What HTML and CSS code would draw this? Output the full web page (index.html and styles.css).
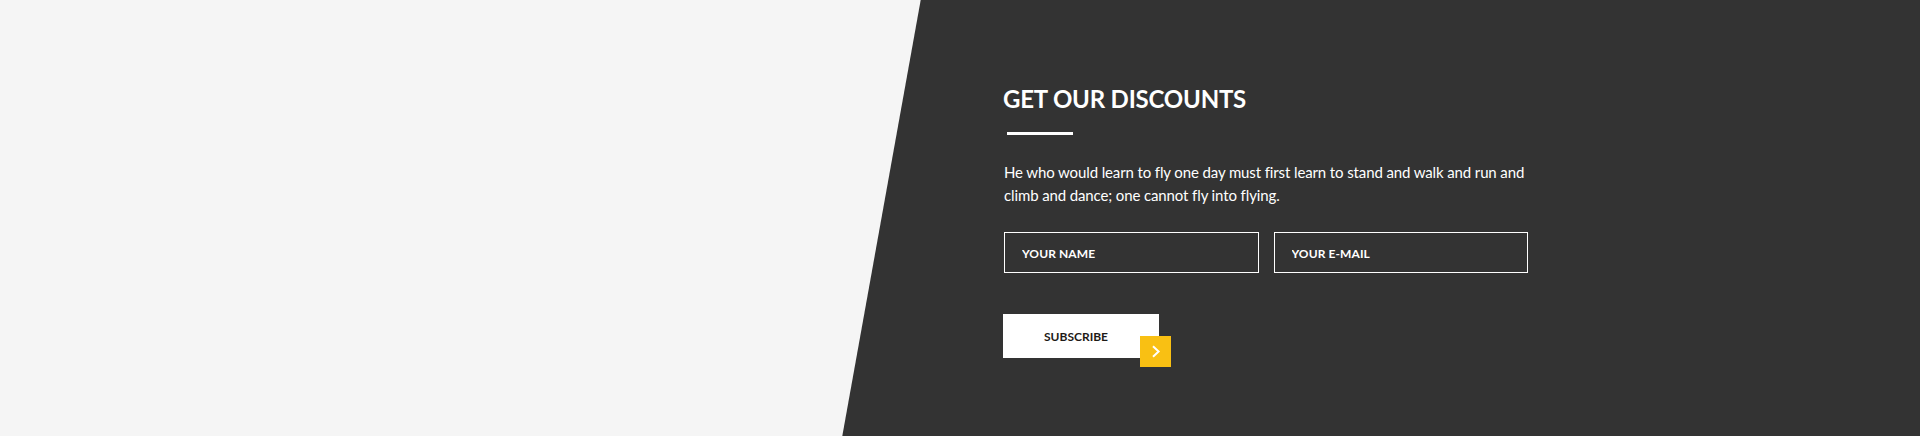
FILE: index.html
```html
<!DOCTYPE html>
<html lang="en">
<head>
<meta charset="utf-8">
<title>Get our discounts</title>
<link rel="stylesheet" href="styles.css">
</head>
<body>
<section class="promo">
  <div class="promo-bg"></div>
  <div class="promo-inner">
    <div class="promo-spacer"></div>
    <div class="promo-content">
      <h2 class="promo-title">GET OUR DISCOUNTS</h2>
      <span class="promo-rule"></span>
      <p class="promo-text">He who would learn to fly one day must first learn to stand and walk and run and climb and dance; one cannot fly into flying.</p>
      <form class="promo-form">
        <div class="field-row">
          <input class="field" type="text" placeholder="YOUR NAME">
          <input class="field" type="email" placeholder="YOUR E-MAIL">
        </div>
        <button class="subscribe" type="button">SUBSCRIBE
          <span class="subscribe-arrow">
            <svg width="10" height="13" viewBox="0 0 10 13"><path d="M2 1.2 L7.6 6.5 L2 11.8" fill="none" stroke="#fff" stroke-width="2"/></svg>
          </span>
        </button>
      </form>
    </div>
  </div>
</section>
</body>
</html>
```
FILE: styles.css
```css
* { box-sizing: border-box; }
html, body { margin: 0; padding: 0; }
body {
  font-family: Lato, "Open Sans", "Liberation Sans", sans-serif;
  background: #f5f5f5;
}
.promo {
  position: relative;
  height: 436px;
  background: #f5f5f5;
  overflow: hidden;
}
.promo-bg {
  position: absolute;
  inset: 0;
  background: #333333;
  clip-path: polygon(920.7px 0, 100% 0, 100% 100%, 842.3px 100%);
}
.promo-inner {
  position: relative;
  display: flex;
  height: 100%;
}
.promo-spacer {
  width: 1003px;
  flex: none;
}
.promo-content {
  width: 525px;
  padding-top: 85px;
  color: #fff;
}
.promo-title {
  margin: 0;
  font-size: 24px;
  line-height: 1.2;
  font-weight: 700;
  letter-spacing: -0.2px;
  color: #fff;
}
.promo-rule {
  display: block;
  width: 66px;
  height: 3px;
  background: #fff;
  margin: 18px 0 0 4px;
}
.promo-text {
  width: 535px;
  margin: 26px 0 0 1px;
  font-size: 15px;
  line-height: 23.4px;
  letter-spacing: -0.12px;
  color: #fff;
}
.promo-form {
  margin-top: 24px;
}
.field-row {
  display: flex;
  gap: 15px;
  margin-left: 1px;
}
.field {
  width: 255px;
  height: 41px;
  border: 1px solid #fff;
  background: transparent;
  padding: 2px 17px 0;
  font-family: inherit;
  font-size: 12px;
  font-weight: 700;
  letter-spacing: 0.1px;
  color: #fff;
  outline: none;
}
.field::placeholder {
  color: #fff;
  opacity: 1;
}
.subscribe {
  position: relative;
  display: block;
  margin-top: 41px;
  width: 156px;
  height: 44px;
  padding: 2px 0 0 41px;
  text-align: left;
  border: 0;
  background: #fff;
  font-family: inherit;
  font-size: 12px;
  font-weight: 700;
  color: #1e1a17;
  cursor: pointer;
}
.subscribe-arrow {
  position: absolute;
  left: 137px;
  top: 22px;
  width: 31px;
  height: 31px;
  background: #f9c013;
  display: flex;
  align-items: center;
  justify-content: center;
}
```
